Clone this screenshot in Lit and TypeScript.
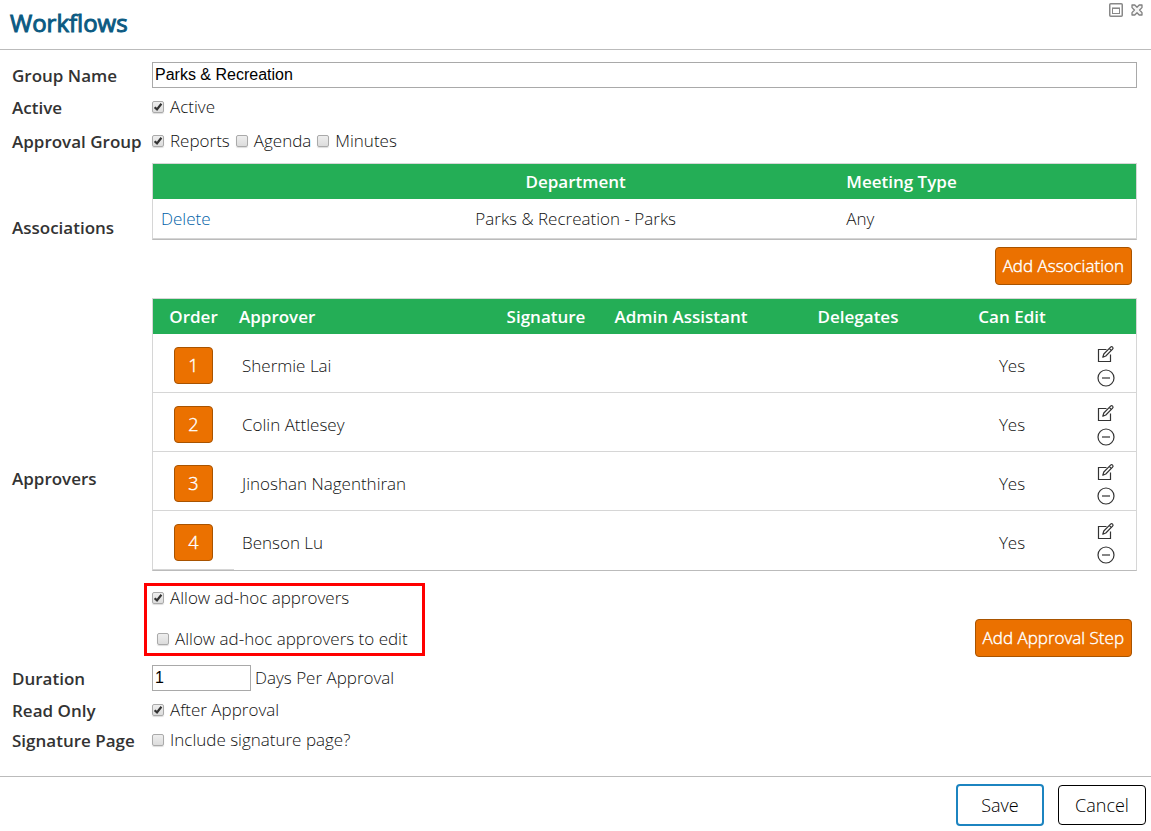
import { LitElement, html, css, svg } from "lit";
import { customElement, state } from "lit/decorators.js";

interface Association {
  department: string;
  meetingType: string;
}

interface Approver {
  name: string;
  canEdit: boolean;
}

const editIcon = svg`
  <svg class="icon" width="18" height="18" viewBox="0 0 18 18" fill="none" stroke="#333" stroke-width="1.2">
    <path d="M9.5 4.5H1.5V16.5H13.5V9.5" />
    <path d="M5.8 12.2 6.8 9 13.6 2.2a1.3 1.3 0 0 1 2 2L8.8 11Z" stroke-linejoin="round" />
    <path d="M12.4 3.6 14.2 5.4" />
  </svg>`;

const removeIcon = svg`
  <svg class="icon" width="18" height="18" viewBox="0 0 18 18" fill="none" stroke="#333" stroke-width="1.2">
    <circle cx="9" cy="9" r="8" />
    <path d="M5 9h8" />
  </svg>`;

@customElement("app-root")
export class AppRoot extends LitElement {
  static styles = css`
    :host {
      display: block;
      background: #fff;
      color: #111;
      font: 300 17px/24px "Open Sans", sans-serif;
    }
    *,
    *::before {
      box-sizing: border-box;
    }
    button {
      font: inherit;
      cursor: pointer;
    }
    .header {
      display: flex;
      justify-content: space-between;
      align-items: flex-start;
      height: 50px;
      padding: 0 8px 0 10px;
      border-bottom: 1px solid #bbb;
    }
    .title {
      margin: 7px 0 0;
      font-size: 24px;
      line-height: 32px;
      font-weight: 400;
      -webkit-text-stroke: 1px #0b5a82;
      color: #0b5a82;
    }
    .window-tools {
      display: flex;
      gap: 8px;
      padding-top: 3px;
    }
    .window-tool {
      display: block;
      padding: 0;
      border: 0;
      background: none;
      line-height: 0;
    }
    .form {
      padding: 12px 14px 21px 12px;
    }
    .row {
      display: grid;
      grid-template-columns: 140px minmax(0, 1fr);
      align-items: center;
      min-height: 30px;
    }
    .row.first {
      min-height: 26px;
    }
    .row.tall {
      min-height: 38px;
    }
    .row.assoc {
      margin: 7px 0;
    }
    .row.duration {
      margin: 8px 0 4px;
      min-height: 26px;
    }
    .name {
      padding-top: 2px;
      color: #333;
      font-weight: 600;
      white-space: nowrap;
    }
    .choices {
      display: flex;
      gap: 6px;
    }
    .choice {
      display: flex;
      align-items: center;
      gap: 6px;
      white-space: nowrap;
    }
    .check {
      appearance: none;
      width: 12px;
      height: 12px;
      margin: 0;
      border: 1px solid #aaa;
      border-radius: 2px;
      background: linear-gradient(#eee, #dcdcdc);
      box-shadow: 0 1px 1px #ddd;
    }
    .check:checked {
      background: url("data:image/svg+xml,%3Csvg xmlns='http://www.w3.org/2000/svg' viewBox='0 0 10 10'%3E%3Cpath d='M1.6 5.2 4 7.4 8.4 1.8' fill='none' stroke='%23333' stroke-width='2.2'/%3E%3C/svg%3E"),
        linear-gradient(#eee, #dcdcdc);
    }
    .field {
      width: 100%;
      height: 26px;
      padding: 0 2px;
      border: 1px solid #a9a9a9;
      background: #fff;
      color: #000;
      font: 16px "Liberation Sans", sans-serif;
    }
    .field.short {
      width: 99px;
    }
    .with-unit {
      display: flex;
      align-items: center;
      gap: 4px;
    }
    .grid {
      width: 100%;
      border-collapse: separate;
      border-spacing: 0;
      table-layout: fixed;
      border: 1px solid #d6d6d6;
      border-bottom-color: #bbb;
    }
    .grid th {
      height: 35px;
      padding: 0;
      background: #24ae56;
      color: #fff;
      font-weight: 600;
      white-space: nowrap;
    }
    .grid td {
      height: 59px;
      padding: 6px 0 0;
      border-bottom: 1px solid #d6d6d6;
      text-align: center;
    }
    .grid td.step {
      padding-top: 4px;
    }
    .grid.associations td {
      height: 40px;
      padding-top: 0;
    }
    .grid.approvers tr:last-child td + td {
      border-bottom-color: transparent;
    }
    .grid.associations td.delete {
      padding-left: 8px;
      text-align: left;
    }
    .grid .type,
    .grid td.type {
      padding-left: 15px;
      text-align: left;
    }
    .grid th.person {
      padding-left: 5px;
      text-align: left;
    }
    .grid td.person {
      padding-left: 8px;
      text-align: left;
    }
    .c-delete {
      width: 17%;
    }
    .c-department {
      width: 52%;
    }
    .c-order {
      width: 81px;
    }
    .c-signature {
      width: 104px;
    }
    .c-admin {
      width: 166px;
    }
    .c-delegates {
      width: 188px;
    }
    .c-edit {
      width: 120px;
    }
    .c-tools {
      width: 64px;
    }
    .link {
      color: #005fa8;
      text-decoration: none;
    }
    .action {
      height: 38px;
      padding: 0 7px;
      border: 1px solid #a85300;
      border-radius: 4px;
      background: #eb7100;
      color: #fff;
      -webkit-text-stroke: 0.4px #fff;
      white-space: nowrap;
    }
    .order {
      display: block;
      width: 39px;
      height: 37px;
      margin: 0 auto;
      padding: 0;
      font-size: 18px;
    }
    .tools {
      display: flex;
      flex-direction: column;
      align-items: center;
      gap: 6px;
      padding-left: 4px;
    }
    .tool {
      display: block;
      padding: 0;
      border: 0;
      background: none;
      line-height: 0;
    }
    .below {
      display: flex;
      justify-content: flex-end;
      padding: 7px 5px 6px 0;
    }
    .adhoc-line {
      display: flex;
      justify-content: space-between;
      align-items: flex-end;
      padding: 12px 5px 0 0;
    }
    .adhoc {
      display: flex;
      flex-direction: column;
      gap: 17px;
      width: 281px;
      height: 73px;
      margin: 0 0 1px -8px;
      padding: 0 5px;
      border: 3px solid #f00;
    }
    .adhoc .nested {
      padding-left: 5px;
    }
    .footer {
      display: flex;
      justify-content: flex-end;
      align-items: center;
      gap: 14px;
      padding: 7px 5px 5px;
      border-top: 1px solid #bbb;
    }
    .dialog-button {
      width: 88px;
      height: 40px;
      padding: 0;
      border: 1px solid #000;
      border-radius: 4px;
      background: #fff;
      color: #000;
      font-size: 18px;
    }
    .dialog-button.primary {
      height: 42px;
      border: 2px solid #1c84c0;
    }
  `;

  @state() private associations: Association[] = [
    { department: "Parks & Recreation - Parks", meetingType: "Any" },
  ];

  @state() private approvers: Approver[] = [
    { name: "Shermie Lai", canEdit: true },
    { name: "Colin Attlesey", canEdit: true },
    { name: "Jinoshan Nagenthiran", canEdit: true },
    { name: "Benson Lu", canEdit: true },
  ];

  private choice(text: string, checked: boolean, extra = "") {
    return html`<label class="choice ${extra}"
      ><input class="check" type="checkbox" .checked=${checked} /><span>${text}</span></label
    >`;
  }

  private renderAssociations() {
    return html`
      <table class="grid associations" aria-labelledby="associations">
        <colgroup>
          <col class="c-delete" />
          <col class="c-department" />
          <col />
        </colgroup>
        <thead>
          <tr>
            <th></th>
            <th>Department</th>
            <th class="type">Meeting Type</th>
          </tr>
        </thead>
        <tbody>
          ${this.associations.map(
            (a) => html`<tr>
              <td class="delete"><a class="link" href="#">Delete</a></td>
              <td>${a.department}</td>
              <td class="type">${a.meetingType}</td>
            </tr>`
          )}
        </tbody>
      </table>
    `;
  }

  private renderApprovers() {
    return html`
      <table class="grid approvers" aria-labelledby="approvers">
        <colgroup>
          <col class="c-order" />
          <col />
          <col class="c-signature" />
          <col class="c-admin" />
          <col class="c-delegates" />
          <col class="c-edit" />
          <col class="c-tools" />
        </colgroup>
        <thead>
          <tr>
            <th>Order</th>
            <th class="person">Approver</th>
            <th>Signature</th>
            <th>Admin Assistant</th>
            <th>Delegates</th>
            <th>Can Edit</th>
            <th></th>
          </tr>
        </thead>
        <tbody>
          ${this.approvers.map(
            (a, i) => html`<tr>
              <td class="step"><button class="action order" type="button">${i + 1}</button></td>
              <td class="person">${a.name}</td>
              <td></td>
              <td></td>
              <td></td>
              <td>${a.canEdit ? "Yes" : "No"}</td>
              <td>
                <div class="tools">
                  <button class="tool" type="button" aria-label="Edit">${editIcon}</button>
                  <button class="tool" type="button" aria-label="Remove">${removeIcon}</button>
                </div>
              </td>
            </tr>`
          )}
        </tbody>
      </table>
    `;
  }

  render() {
    return html`
      <header class="header">
        <h1 class="title">Workflows</h1>
        <div class="window-tools">
          <button class="window-tool" type="button" aria-label="Maximize">
            <svg width="14" height="14" viewBox="0 0 14 14" fill="none" stroke="#888">
              <rect x="0.75" y="0.75" width="12.5" height="12.5" rx="1" stroke-width="1.5" />
              <rect x="3.5" y="5.5" width="7" height="5" />
              <path d="M3 4.5h8" stroke="#bbb" />
            </svg>
          </button>
          <button class="window-tool" type="button" aria-label="Close">
            <svg width="12" height="14" viewBox="0 0 12 14" fill="#f4f4f4" stroke="#808080" stroke-width="1.3" stroke-linejoin="round">
              <path d="M1 2H3.8L6 4.2 8.2 2H11V4.6L8.6 7 11 9.6V12H8.2L6 9.8 3.8 12H1V9.6L3.4 7 1 4.6Z" />
            </svg>
          </button>
        </div>
      </header>

      <form class="form">
        <div class="row first">
          <label class="name" for="group-name">Group Name</label>
          <input class="field" id="group-name" type="text" value="Parks &amp; Recreation" />
        </div>
        <div class="row tall">
          <span class="name">Active</span>
          <div class="choices">${this.choice("Active", true)}</div>
        </div>
        <div class="row">
          <span class="name">Approval Group</span>
          <div class="choices">
            ${this.choice("Reports", true)} ${this.choice("Agenda", false)} ${this.choice("Minutes", false)}
          </div>
        </div>
        <div class="row assoc">
          <span class="name" id="associations">Associations</span>
          <div>
            ${this.renderAssociations()}
            <div class="below">
              <button class="action" type="button">Add Association</button>
            </div>
          </div>
        </div>
        <div class="row">
          <span class="name" id="approvers">Approvers</span>
          <div>
            ${this.renderApprovers()}
            <div class="adhoc-line">
              <div class="adhoc">
                ${this.choice("Allow ad-hoc approvers", true)}
                ${this.choice("Allow ad-hoc approvers to edit", false, "nested")}
              </div>
              <button class="action" type="button">Add Approval Step</button>
            </div>
          </div>
        </div>
        <div class="row duration">
          <label class="name" for="duration">Duration</label>
          <div class="with-unit">
            <input class="field short" id="duration" type="text" value="1" />
            <span>Days Per Approval</span>
          </div>
        </div>
        <div class="row">
          <span class="name">Read Only</span>
          <div class="choices">${this.choice("After Approval", true)}</div>
        </div>
        <div class="row">
          <span class="name">Signature Page</span>
          <div class="choices">${this.choice("Include signature page?", false)}</div>
        </div>
      </form>

      <footer class="footer">
        <button class="dialog-button primary" type="button">Save</button>
        <button class="dialog-button" type="button">Cancel</button>
      </footer>
    `;
  }
}
